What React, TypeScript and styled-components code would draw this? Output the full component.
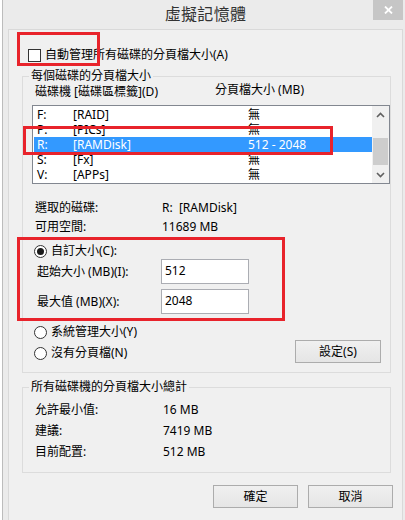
import React from 'react';
import styled, { createGlobalStyle } from 'styled-components';

const GlobalStyle = createGlobalStyle`
	html, body {
		margin: 0;
		padding: 0;
		background: #ffffff;
		overflow: hidden;
	}
	body {
		font-family: "Noto Sans", "Noto Sans CJK TC", sans-serif;
		font-size: 12px;
		color: #000;
	}
	* {
		box-sizing: border-box;
	}
`;

const Window = styled.div`
	position: relative;
	width: 406px;
	height: 520px;
	margin-left: 2px;
	padding: 0 5px;
	border-left: 1px solid #bcbcbc;
	background: #ebebeb;
	display: flex;
	flex-direction: column;
`;

const TitleBar = styled.div`
	height: 29px;
	display: grid;
	grid-template-columns: 1fr auto 1fr;
`;

const TitleText = styled.div`
	grid-column: 2;
	font-size: 16px;
	line-height: 28px;
	color: #333;
	letter-spacing: 0.3px;
`;

const CloseButton = styled.div`
	grid-column: 3;
	justify-self: end;
	width: 30px;
	height: 20px;
	background: #c6c6c6;
	display: flex;
	align-items: center;
	justify-content: center;
`;

const Panel = styled.div`
	flex: 1;
	border: 1px solid #d9d9d9;
	border-bottom: none;
	background: #f0f0f0;
	display: flex;
	flex-direction: column;
`;

const CheckRow = styled.div`
	margin-top: 17px;
	height: 16px;
	padding-left: 19px;
	display: flex;
	align-items: center;
	gap: 4px;
	line-height: 16px;
`;

const CheckBox = styled.div`
	width: 13px;
	height: 13px;
	border: 1px solid #333;
	background: #fff;
`;

const GroupBox = styled.fieldset<{ $top: number; $bottom: number }>`
	margin: ${(p) => p.$top}px 0 0 13px;
	padding: 0 0 ${(p) => p.$bottom}px 0;
	width: 369px;
	min-width: 0;
	border: 1px solid #dcdcdc;
`;

const Legend = styled.legend`
	margin-left: 6px;
	padding: 0 2px;
	line-height: 16px;
	font-size: 12px;
`;

const HeaderRow = styled.div`
	height: 16px;
	padding-left: 12px;
	display: flex;
	line-height: 16px;
`;

const HeaderCell = styled.span<{ $w?: number; $up?: number }>`
	width: ${(p) => (p.$w ? `${p.$w}px` : 'auto')};
	position: relative;
	top: ${(p) => -(p.$up || 0)}px;
`;

const ListBox = styled.div`
	margin: 5px 0 0 9px;
	width: 358px;
	height: 79px;
	border: 1px solid #828790;
	background: #fff;
	display: flex;
`;

const Rows = styled.div`
	flex: 1;
	padding: 1px 0 0 1px;
`;

const Row = styled.div<{ $selected?: boolean }>`
	height: 15px;
	line-height: 15px;
	display: flex;
	background: ${(p) => (p.$selected ? '#3399ff' : 'transparent')};
	color: ${(p) => (p.$selected ? '#fff' : '#000')};
`;

const Cell = styled.span<{ $w?: number; $pl?: number }>`
	width: ${(p) => (p.$w ? `${p.$w}px` : 'auto')};
	padding-left: ${(p) => p.$pl || 0}px;
	white-space: nowrap;
`;

const ScrollBar = styled.div`
	width: 17px;
	background: #f0f0f0;
	display: flex;
	flex-direction: column;
`;

const ScrollArrow = styled.div`
	height: 17px;
	display: flex;
	align-items: center;
	justify-content: center;
`;

const ScrollTrack = styled.div`
	flex: 1;
	padding: 15px 1px 0;
`;

const Thumb = styled.div`
	height: 27px;
	background: #cdcdcd;
`;

const InfoRow = styled.div<{ $top: number; $labelW: number }>`
	margin-top: ${(p) => p.$top}px;
	height: 16px;
	line-height: 16px;
	padding-left: 12px;
	display: grid;
	grid-template-columns: ${(p) => p.$labelW}px auto;
	white-space: nowrap;
`;

const RadioRow = styled.div<{ $top?: number }>`
	margin-top: ${(p) => p.$top || 0}px;
	height: 16px;
	line-height: 16px;
	padding-left: 11px;
	display: flex;
	align-items: center;
	gap: 4px;
`;

const Radio = styled.div<{ $checked?: boolean }>`
	width: 13px;
	height: 13px;
	border-radius: 50%;
	border: 1px solid #333;
	background: #fff;
	display: flex;
	align-items: center;
	justify-content: center;

	&::after {
		content: '';
		display: ${(p) => (p.$checked ? 'block' : 'none')};
		width: 7px;
		height: 7px;
		border-radius: 50%;
		background: #1a1a1a;
	}
`;

const FieldRow = styled.div<{ $top?: number }>`
	margin-top: ${(p) => p.$top || 0}px;
	height: 25px;
	padding-left: 14px;
	display: flex;
	align-items: center;
`;

const FieldLabel = styled.span`
	width: 124px;
	line-height: 16px;
	padding-top: 1px;
	white-space: nowrap;
`;

const TextBox = styled.input`
	width: 88px;
	height: 25px;
	border: 1px solid #abadb3;
	background: #fff;
	padding: 0 3px 3px;
	font: inherit;
	color: #000;
	outline: none;
`;

const BottomRow = styled.div`
	margin-top: 10px;
	display: flex;
	align-items: flex-start;
`;

const RadioColumn = styled.div`
	display: flex;
	flex-direction: column;
	gap: 5px;
`;

const Button = styled.div<{ $top?: number; $right?: number }>`
	margin-top: ${(p) => p.$top || 0}px;
	margin-right: ${(p) => p.$right || 0}px;
	width: ${(p) => (p.$right !== undefined ? 86 : 85)}px;
	height: 23px;
	border: 1px solid #acacac;
	background: linear-gradient(#f0f0f0, #e5e5e5);
	display: flex;
	align-items: center;
	justify-content: center;
	line-height: 16px;
`;

const Spacer = styled.div`
	flex: 1;
`;

const ButtonRow = styled.div`
	margin-top: 12px;
	padding-right: 9px;
	display: flex;
	justify-content: flex-end;
	gap: 10px;
`;

const Mark = styled.div<{ $x: number; $y: number; $w: number; $h: number }>`
	position: absolute;
	left: ${(p) => p.$x - 3}px;
	top: ${(p) => p.$y}px;
	width: ${(p) => p.$w}px;
	height: ${(p) => p.$h}px;
	border: 3px solid #e8232b;
	pointer-events: none;
`;

const drives = [
	{ letter: 'F:', label: '[RAID]', size: '無' },
	{ letter: 'P:', label: '[PICs]', size: '無' },
	{ letter: 'R:', label: '[RAMDisk]', size: '512 - 2048', selected: true },
	{ letter: 'S:', label: '[Fx]', size: '無' },
	{ letter: 'V:', label: '[APPs]', size: '無' }
];

const Chevron = ({ down }: { down?: boolean }) => (
	<svg width="9" height="6" viewBox="0 0 9 6">
		<polyline
			points={down ? '1,1 4.5,4.5 8,1' : '1,5 4.5,1.5 8,5'}
			fill="none"
			stroke="#606060"
			strokeWidth="1.6"
		/>
	</svg>
);

export default function App() {
	return (
		<>
			<GlobalStyle />
			<Window>
				<TitleBar>
					<TitleText>虛擬記憶體</TitleText>
					<CloseButton>
						<svg width="9" height="8" viewBox="0 0 9 8">
							<path d="M1 0.5 L8 7.5 M8 0.5 L1 7.5" stroke="#fff" strokeWidth="1.8" />
						</svg>
					</CloseButton>
				</TitleBar>
				<Panel>
					<CheckRow>
						<CheckBox />
						<span>自動管理所有磁碟的分頁檔大小(A)</span>
					</CheckRow>

					<GroupBox $top={5} $bottom={9}>
						<Legend>每個磁碟的分頁檔大小</Legend>
						<HeaderRow>
							<HeaderCell $w={180}>磁碟機 [磁碟區標籤](D)</HeaderCell>
							<HeaderCell $up={2}>分頁檔大小 (MB)</HeaderCell>
						</HeaderRow>
						<ListBox>
							<Rows>
								{drives.map((d) => (
									<Row key={d.letter} $selected={d.selected}>
										<Cell $w={39} $pl={3}>{d.letter}</Cell>
										<Cell $w={175}>{d.label}</Cell>
										<Cell>{d.size}</Cell>
									</Row>
								))}
							</Rows>
							<ScrollBar>
								<ScrollArrow>
									<Chevron />
								</ScrollArrow>
								<ScrollTrack>
									<Thumb />
								</ScrollTrack>
								<ScrollArrow>
									<Chevron down />
								</ScrollArrow>
							</ScrollBar>
						</ListBox>

						<InfoRow $top={16} $labelW={127}>
							<span>選取的磁碟:</span>
							<span>R:&nbsp; [RAMDisk]</span>
						</InfoRow>
						<InfoRow $top={3} $labelW={127}>
							<span>可用空間:</span>
							<span>11689 MB</span>
						</InfoRow>

						<RadioRow $top={8}>
							<Radio $checked />
							<span>自訂大小(C):</span>
						</RadioRow>
						<FieldRow>
							<FieldLabel>起始大小 (MB)(I):</FieldLabel>
							<TextBox readOnly value="512" />
						</FieldRow>
						<FieldRow $top={5}>
							<FieldLabel>最大值 (MB)(X):</FieldLabel>
							<TextBox readOnly value="2048" />
						</FieldRow>

						<BottomRow>
							<RadioColumn>
								<RadioRow>
									<Radio />
									<span>系統管理大小(Y)</span>
								</RadioRow>
								<RadioRow>
									<Radio />
									<span>沒有分頁檔(N)</span>
								</RadioRow>
							</RadioColumn>
							<Spacer />
							<Button $top={16} $right={9}>設定(S)</Button>
						</BottomRow>
					</GroupBox>

					<GroupBox $top={6} $bottom={12}>
						<Legend>所有磁碟機的分頁檔大小總計</Legend>
						<InfoRow $top={7} $labelW={128}>
							<span>允許最小值:</span>
							<span>16 MB</span>
						</InfoRow>
						<InfoRow $top={5} $labelW={128}>
							<span>建議:</span>
							<span>7419 MB</span>
						</InfoRow>
						<InfoRow $top={5} $labelW={128}>
							<span>目前配置:</span>
							<span>512 MB</span>
						</InfoRow>
					</GroupBox>

					<ButtonRow>
						<Button>確定</Button>
						<Button>取消</Button>
					</ButtonRow>
				</Panel>

				<Mark $x={17} $y={32} $w={83} $h={34} />
				<Mark $x={23} $y={126} $w={310} $h={29} />
				<Mark $x={17} $y={237} $w={268} $h={84} />
			</Window>
		</>
	);
}
